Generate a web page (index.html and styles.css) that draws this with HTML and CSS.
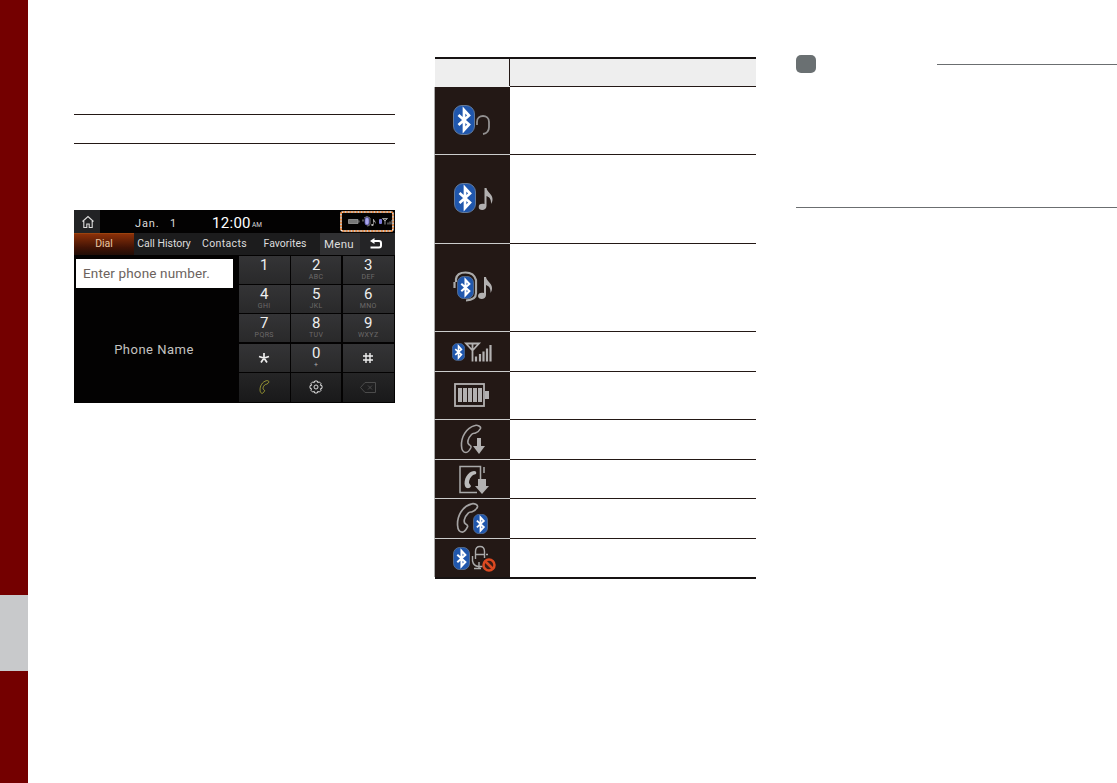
FILE: index.html
```html
<!DOCTYPE html>
<html lang="en">
<head>
<meta charset="utf-8">
<title>Bluetooth phone</title>
<link rel="stylesheet" href="styles.css">
</head>
<body>
<svg class="defs" aria-hidden="true">
  <defs>
    <symbol id="bt" viewBox="0 0 22 30">
      <rect x=".5" y=".5" width="21" height="29" rx="8.500" fill="#2057ad" stroke="#637998"/>
      <path d="M5.500 10 16 19.500l-5 5.500V5L16 10.500 5.500 20" fill="none" stroke="#fff" stroke-width="2.700"/>
    </symbol>
    <symbol id="note" viewBox="0 0 15 22">
      <path d="M6 0h2c.5 4 6 6 6 11 0 2-.5 3.500-1.500 5 .3-5-1.500-7-4.500-8v10c0 5-8 5-8 1 0-3 3-4 6-3z" fill="#b2b0b0"/>
    </symbol>
    <symbol id="handset" viewBox="0 0 22 30">
      <path d="M15 1.500C6 4 1 13 1.500 22c.2 4 2 6.500 4.500 6.500 2 0 4-3 5-5 .7-1.500-.5-2-2-3-2-1.300-1.500-6 2.500-10 1.500-1.500 2.500-1 4-1.500 2-.7 4-2.500 5-4.500.7-2-3-3.800-5.500-3z" fill="none" stroke="currentColor" stroke-width="1.600"/>
    </symbol>
  </defs>
</svg>
<div class="page">
  <aside class="rail"><div class="rail-tab"></div></aside>
  <section class="col-phone">
    <div class="title-rule"></div>
    <div class="screen">
      <header class="status">
        <div class="home"><svg width="14" height="14" viewBox="0 0 14 14"><path d="M1.500 6.500 7 1.500l5.500 5M2.800 6v6.500h3V9h2.400v3.500h3V6" fill="none" stroke="#ddd" stroke-width="1.100"/></svg></div>
        <span class="date">Jan.</span><span class="day">1</span>
        <span class="time">12:00</span><span class="ampm">AM</span>
        <div class="indicators">
          <svg width="54" height="21" viewBox="0 0 54 21">
            <rect x="1" y="1" width="52" height="19" rx="2" fill="none" stroke="#fff" stroke-width="1.500"/>
            <rect x="1" y="1" width="52" height="19" rx="2" fill="none" stroke="#e97824" stroke-width="1.500" stroke-dasharray="2 1.200"/>
            <path d="M8.500 8.500h9.500v4h-9.500zM19 9.500v2" fill="#777" stroke="#999" stroke-width=".8"/>
            <path d="M24 7q3-3 6 0v6q0 2-3 2" fill="none" stroke="#999" stroke-width=".8"/>
            <rect x="25" y="6.500" width="4" height="7.500" rx="2" fill="#aaa7ec" stroke="#6460b5" stroke-width=".8"/>
            <path d="M23 8.500v2" stroke="#aaa"/>
            <use href="#note" x="31" y="8" width="5" height="7"/>
            <rect x="39" y="8" width="3" height="5" rx="1" fill="#7c7ad6"/>
            <path d="M42.500 7.500h5L45 10zM45 8v5.500M48 13.500v-2M50 13.500v-3M52 13.500V9" fill="none" stroke="#aaa" stroke-width=".9"/>
          </svg>
        </div>
      </header>
      <nav class="tabs">
        <div class="tab active">Dial</div><div class="tab history">Call History</div><div class="tab contacts">Contacts</div><div class="tab favorites">Favorites</div><div class="tab menu">Menu</div>
        <div class="tab back"><svg width="14" height="12" viewBox="0 0 14 12"><path d="M4 3h6q2 0 2 2v2.500q0 2-2 2H1.500" fill="none" stroke="#fff" stroke-width="2"/><path d="M5.500 0v6L1 3z" fill="#fff"/></svg></div>
      </nav>
      <div class="dialer">
        <div class="entry">
          <div class="number">Enter phone number.</div>
          <div class="name">Phone Name</div>
        </div>
        <div class="keys">
          <div class="key"><b>1</b></div><div class="key"><b>2</b><i>ABC</i></div><div class="key"><b>3</b><i>DEF</i></div>
          <div class="key"><b>4</b><i>GHI</i></div><div class="key"><b>5</b><i>JKL</i></div><div class="key"><b>6</b><i>MNO</i></div>
          <div class="key"><b>7</b><i>PQRS</i></div><div class="key"><b>8</b><i>TUV</i></div><div class="key"><b>9</b><i>WXYZ</i></div>
          <div class="key icon"><svg width="12" height="12" viewBox="0 0 12 12"><path d="M6 1v5M1 4.500l5 1.500 5-1.500M6 6l-3 4.500M6 6l3 4.500" fill="none" stroke="#eee" stroke-width="1.700"/></svg></div>
          <div class="key"><b>0</b><i class="plus">+</i></div>
          <div class="key icon"><svg width="12" height="12" viewBox="0 0 12 12"><path d="M4 1v10M8 1v10M1 4h10M1 8h10" stroke="#eee" stroke-width="1.400"/></svg></div>
          <div class="key icon dark call"><svg width="11" height="14"><use href="#handset" width="11" height="14"/></svg></div>
          <div class="key icon dark"><svg width="14" height="14" viewBox="0 0 14 14" fill="none" stroke="#ddd"><path d="M5.700 1h2.600l.4 1.600 1.600-.7 1.800 1.800-.7 1.600 1.600.4v2.600l-1.600.4.7 1.600-1.800 1.800-1.600-.7-.4 1.600H5.700l-.4-1.600-1.600.7-1.800-1.800.7-1.600L1 8.300V5.700l1.600-.4-.7-1.600 1.800-1.800 1.600.7z"/><circle cx="7" cy="7" r="2"/></svg></div>
          <div class="key icon dark"><svg width="16" height="11" viewBox="0 0 16 11"><path d="M5 .5h10.500v10H5L.5 5.500zM8 3.500l4 4M12 3.500l-4 4" fill="none" stroke="#4b4b4b"/></svg></div>
        </div>
      </div>
    </div>
  </section>
  <section class="col-icons">
    <div class="table">
      <div class="head"><div class="head-icon"></div><div class="head-text"></div></div>
      <div class="row r68"><div class="cell"><svg width="75" height="67">
        <use href="#bt" x="18" y="18" width="22" height="30"/>
        <path d="M42 38v-3c0-8 12-8 12 0v5q0 6-6 7" fill="none" stroke="#929090" stroke-width="1.800"/></svg></div><div class="desc"></div></div>
      <div class="row r89"><div class="cell"><svg width="75" height="88">
        <use href="#bt" x="19" y="28" width="22" height="30"/><use href="#note" x="43.500" y="33" width="15" height="22"/></svg></div><div class="desc"></div></div>
      <div class="row r88"><div class="cell"><svg width="75" height="87">
        <use href="#bt" x="22" y="32" width="17" height="23"/>
        <path d="M19.500 38v6M21 38v-3q1-6.500 9.500-6.500T41 36v13q0 7-10 7.500" fill="none" stroke="#aaa" stroke-width="2.200"/>
        <use href="#note" x="43" y="33" width="15" height="22"/></svg></div><div class="desc"></div></div>
      <div class="row r40"><div class="cell"><svg width="75" height="39">
        <use href="#bt" x="17" y="11" width="13" height="18"/>
        <g fill="none" stroke="#b3b1b1"><path d="M31 11.500h13l-6.500 7zM37.500 11v18.500" stroke-width="1.800"/><path d="M41 29.500v-5M45 29.500v-7.500M48.500 29.500v-10M52 29.500v-13M55.500 29.500v-16.500" stroke-width="2.200"/></g></svg></div><div class="desc"></div></div>
      <div class="row r48"><div class="cell"><svg width="75" height="47">
        <rect x="20" y="12" width="29" height="22" fill="none" stroke="#b3b1b1" stroke-width="1.800"/>
        <path d="M23 16h4v14h-4zM28 16h4v14h-4zM33 16h4v14h-4zM38 16h4v14h-4zM43 16h4v14h-4zM50 19h4v8h-4z" fill="#b3b1b1"/></svg></div><div class="desc"></div></div>
      <div class="row r40"><div class="cell"><svg width="75" height="39">
        <use href="#handset" x="25" y="4" width="22" height="30"/><path d="M42 18h4v8h4l-6 8-6-8h4z" fill="#b3b1b1"/></svg></div><div class="desc"></div></div>
      <div class="row r39"><div class="cell"><svg width="75" height="38">
        <path d="M45.500 20V6.500H25v26h17M49 7v6" fill="none" stroke="#aaa" stroke-width="1.500"/>
        <path d="M39 11c-6 0-11 9-9 15 1 3 5 3 6 0l-2-3q0-5 4-8l3-1q1-3-2-3z" fill="#bbb"/>
        <path d="M43 19h8v7h3l-7 8-7-8h3z" fill="#b3b1b1"/></svg></div><div class="desc"></div></div>
      <div class="row r40"><div class="cell"><svg width="75" height="39">
        <use href="#handset" x="21" y="3" width="23" height="32"/><use href="#bt" x="38" y="15" width="15" height="20"/></svg></div><div class="desc"></div></div>
      <div class="row r38"><div class="cell"><svg width="75" height="38">
        <use href="#bt" x="18" y="8" width="17" height="23"/>
        <path d="M40.500 20v-7.500q0-5 4.500-5t4.500 5V19M41 15.500h8M51 15.500h2M37.500 17v5q1 5 6 5.500h4M44 23v6.500M39 29.500h7" fill="none" stroke="#aaa" stroke-width="1.400"/>
        <circle cx="54" cy="26" r="5.500" fill="#3b1c15" stroke="#db4921" stroke-width="2.500"/><path d="m50 22 8 8" stroke="#db4921" stroke-width="2.500"/></svg></div><div class="desc"></div></div>
    </div>
  </section>
  <section class="col-note">
    <div class="note-head"><div class="badge"></div><div class="line"></div></div>
    <div class="note-end"></div>
  </section>
</div>
</body>
</html>
```
FILE: styles.css
```css
* { box-sizing: border-box; }
body { margin: 0; background: #fff; font-family: Roboto, "Liberation Sans", sans-serif; }
.defs { position: absolute; width: 0; height: 0; }
svg { display: block; }
.page { display: flex; width: 1117px; height: 783px; overflow: hidden; }
.rail { width: 28px; background: #740000; padding-top: 595px; flex: none; }
.rail-tab { height: 76px; background: #c8c9cb; }
.col-phone { width: 321px; margin-left: 46px; padding-top: 114px; flex: none; }
.title-rule { height: 30px; border-top: 1px solid #231815; border-bottom: 1px solid #231815; margin-bottom: 66px; }
.screen { height: 193px; width: 320.500px; background: #030202; color: #ddd; overflow: hidden; }
.status { display: flex; height: 23px; align-items: center; white-space: nowrap; }
.home { width: 26px; height: 23px; background: #222325; padding: 5px 0 0 7px; }
.date { width: 35px; margin-left: 35px; font-size: 11px; letter-spacing: .9px; padding-top: 3px; }
.day { width: 42px; font-size: 11px; padding-top: 3px; }
.time { width: 40px; font-size: 15px; letter-spacing: .3px; padding-top: 2px; color: #fff; }
.ampm { width: 88px; font-size: 6.500px; padding-top: 7px; }
.indicators { width: 54px; height: 22px; }
.tabs { display: flex; height: 22px; font-size: 10.500px; line-height: 22px; background: #1c1c1d; text-align: center; white-space: nowrap; }
.tab { flex: none; }
.active { width: 60px; background: linear-gradient(#8b3008, #411305 65%, #210d06); color: #e9c5a1; border-top: 1px solid #9b430f; line-height: 20px; }
.history { width: 62px; padding-right: 2px; }
.contacts { width: 60px; letter-spacing: .35px; padding-right: 3px; }
.favorites { width: 64px; padding-right: 6px; }
.menu { width: 40px; background: #303032; font-size: 11.500px; letter-spacing: .3px; padding-right: 2px; }
.back { width: 35px; background: #242426; padding: 5px 0 0 9px; }
.dialer { display: flex; height: 148px; }
.entry { width: 165px; padding: 4px 6px 0 2px; flex: none; }
.number { height: 29px; background: #fff; color: #6c625d; font-size: 13.500px; line-height: 29px; padding-left: 7px; letter-spacing: .15px; white-space: nowrap; }
.name { margin-top: 53px; padding-right: 1px; text-align: center; font-size: 13px; line-height: 17px; letter-spacing: .5px; color: #c4c2c0; }
.keys { display: grid; grid-template-columns: 50.500px 50.500px 51px; grid-template-rows: 27.500px 28px 28px 28px 28.500px; gap: 1.400px; padding-top: 1px; }
.key { background: linear-gradient(#343436, #29292a); text-align: center; }
.key b { display: block; font-size: 15px; font-weight: 400; line-height: 19px; height: 18px; color: #eee; }
.key i { display: block; font-size: 7px; font-style: normal; line-height: 7px; color: #6c6a6a; letter-spacing: .4px; }
.key .plus { color: #aaa; }
.key.icon { display: flex; justify-content: center; align-items: center; }
.key.dark { background: linear-gradient(#252526, #19191a); }
.call { color: #bdbb39; }
.col-icons { width: 322px; margin-left: 39px; padding-top: 57px; flex: none; }
.table { border-bottom: 2px solid #171313; border-top: 2px solid #171313; margin-left: 1px; }
.head { display: flex; height: 28px; background: #eee; }
.head-icon { width: 75px; height: 27px; border-right: 1px solid #231815; }
.head-text { flex: 1; border-bottom: 1px solid #231815; }
.row { display: flex; margin-left: -1px; }
.cell { width: 76px; background: #231815; border-left: 1px solid #aaa; border-bottom: 1px solid #ccc; color: #a5a3a3; }
.desc { flex: 1; border-bottom: 1px solid #231815; }
.row:last-child > div { border-bottom: 0; }
.r68 { height: 68px; }
.r89 { height: 89px; }
.r88 { height: 88px; }
.r40 { height: 40px; }
.r48 { height: 48px; }
.r39 { height: 39px; }
.r38 { height: 38px; }
.col-note { flex: 1; margin-left: 40px; padding-top: 55px; }
.note-head { display: flex; height: 152px; }
.badge { width: 20px; height: 18px; border-radius: 5px; background: #6a7072; margin-right: 121px; }
.line { flex: 1; height: 1px; margin-top: 9px; background: #6b6e70; }
.note-end { height: 1px; background: #6b6e70; }
```
